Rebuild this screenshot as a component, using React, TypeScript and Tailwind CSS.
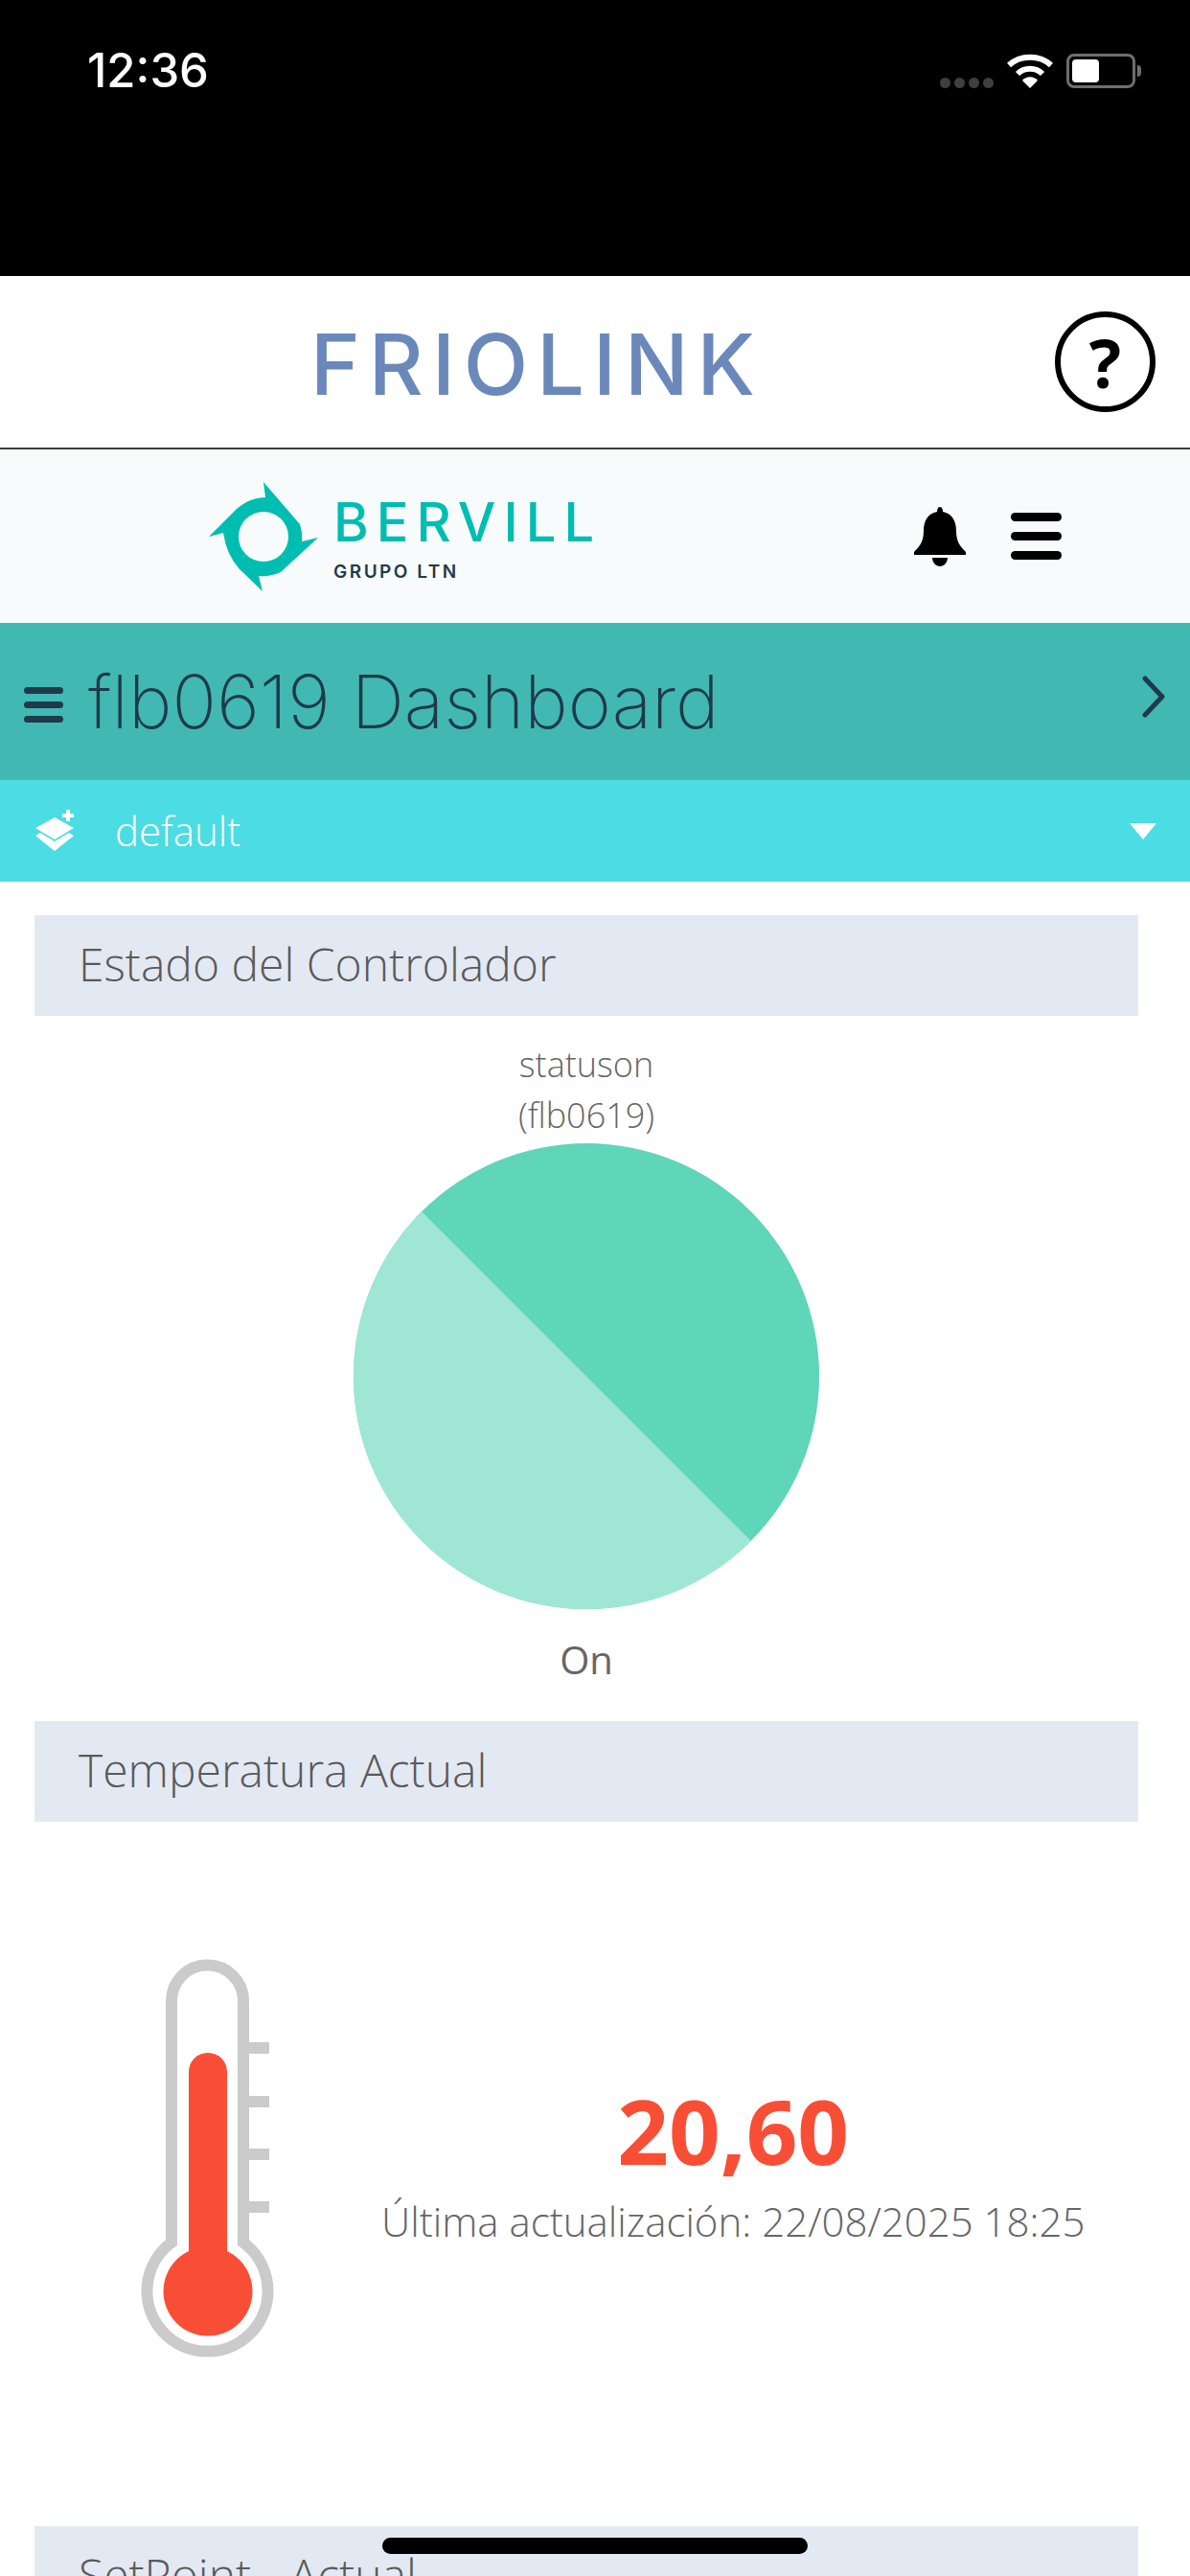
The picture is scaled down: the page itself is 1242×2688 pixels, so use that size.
import React from 'react';

const openSans = { fontFamily: '"Open Sans", sans-serif' };

const StatusBar = () => (
  <div className="h-[288px] bg-black flex items-start justify-between pl-[91px] pr-[51px] pt-[50px]">
    <span className="text-white text-[49px] leading-[48px] font-medium" style={{ fontFamily: 'Inter, sans-serif' }}>12:36</span>
    <div className="flex items-start gap-[14px] pt-[6px]">
      <div className="flex gap-[4px] pt-[25px]">
        <div className="w-[11px] h-[11px] rounded-full bg-[#3f3f3f]"></div>
        <div className="w-[11px] h-[11px] rounded-full bg-[#3f3f3f]"></div>
        <div className="w-[11px] h-[11px] rounded-full bg-[#3f3f3f]"></div>
        <div className="w-[11px] h-[11px] rounded-full bg-[#3f3f3f]"></div>
      </div>
      <svg width="48" height="36" viewBox="0 0 48 36">
        <path d="M2 12 C14 1 34 1 46 12" fill="none" stroke="#fff" strokeWidth="6" />
        <path d="M11 21 C18 14 30 14 37 21" fill="none" stroke="#fff" strokeWidth="6" />
        <path d="M16 28 C20 23 28 23 32 28 L24 36 Z" fill="#fff" />
      </svg>
      <div className="flex items-center">
        <div className="w-[72px] h-[36px] rounded-[8px] border-[3px] border-[#6e6e6e] p-[3px]">
          <div className="w-[28px] h-full rounded-[4px] bg-white"></div>
        </div>
        <div className="w-[4px] h-[12px] rounded-r-full bg-[#6e6e6e] ml-[2px]"></div>
      </div>
    </div>
  </div>
);

const FriolinkBar = () => (
  <div className="h-[181px] bg-white border-b-2 border-[#3d3d3d] flex items-center pl-[324px] pr-[36px] justify-between">
    <span className="text-[#6b88bb] text-[88px] leading-none font-medium tracking-[9px] mt-[4px]" style={{ fontFamily: 'Inter, sans-serif' }}>FRIOLINK</span>
    <div className="w-[105px] h-[105px] rounded-full border-[6px] border-black flex items-center justify-center">
      <span className="text-black text-[70px] leading-none font-bold" style={openSans}>?</span>
    </div>
  </div>
);

const BervillLogo = () => (
  <div className="flex items-center gap-[15px]">
    <svg width="116" height="116" viewBox="-58 -58 116 116">
      <path
        fillRule="evenodd"
        fill="#00bdb2"
        d="M0 -57 L38 -13 Q41 -4 40 5 L57 1 L18 37 Q7 42 -5 41 L-1 57 L-25 34 Q-39 18 -42 -4 L-57 0 L-28 -29 Q-14 -41 2 -41 Z M0 -26 A26 26 0 1 0 0 26 A26 26 0 1 0 0 -26 Z"
      />
    </svg>
    <div className="flex flex-col mt-[12px]">
      <span className="text-[#00bdb2] text-[56px] leading-[44px] tracking-[8px] font-medium" style={{ fontFamily: 'Inter, sans-serif' }}>BERVILL</span>
      <span className="text-[#1f3a4a] text-[19px] leading-[24px] font-semibold tracking-[2.5px] mt-[18px]" style={{ fontFamily: 'Inter, sans-serif' }}>GRUPO LTN</span>
    </div>
  </div>
);

const BervillBar = () => (
  <div className="h-[181px] bg-[#f8fbfc] flex items-center justify-between pl-[217px] pr-[134px]">
    <BervillLogo />
    <div className="flex items-center gap-[47px]">
      <svg width="54" height="62" viewBox="0 0 54 62">
        <path d="M27 0 C29 0 30 2 30 5 C40 7 44 15 44 25 C44 36 48 41 54 47 V50 H0 V47 C6 41 10 36 10 25 C10 15 14 7 24 5 C24 2 25 0 27 0 Z" fill="#000" />
        <path d="M19 53 H35 C35 58 31 62 27 62 C23 62 19 58 19 53 Z" fill="#000" />
      </svg>
      <div className="flex flex-col gap-[11px]">
        <div className="w-[53px] h-[9px] rounded-full bg-black"></div>
        <div className="w-[53px] h-[9px] rounded-full bg-black"></div>
        <div className="w-[53px] h-[9px] rounded-full bg-black"></div>
      </div>
    </div>
  </div>
);

const DashboardBar = () => (
  <div className="h-[164px] bg-[#41b9b2] flex items-center justify-between pl-[25px] pr-[25px]">
    <div className="flex items-center gap-[26px]">
      <div className="flex flex-col gap-[8px] mt-[6px]">
        <div className="w-[41px] h-[7px] rounded-full bg-[#1f3a4a]"></div>
        <div className="w-[41px] h-[7px] rounded-full bg-[#1f3a4a]"></div>
        <div className="w-[41px] h-[7px] rounded-full bg-[#1f3a4a]"></div>
      </div>
      <span className="text-[#1f3a4a] text-[77px] leading-none font-extralight" style={{ fontFamily: 'Inter, sans-serif' }}>flb0619 Dashboard</span>
    </div>
    <svg className="mb-[10px]" width="26" height="44" viewBox="0 0 26 44">
      <path d="M4 3 L22 22 L4 41" fill="none" stroke="#1f3a4a" strokeWidth="5" strokeLinecap="round" strokeLinejoin="round" />
    </svg>
  </div>
);

const LayerBar = () => (
  <div className="h-[106px] bg-[#4cdce3] flex items-center justify-between pl-[36px] pr-[35px]">
    <div className="flex items-center gap-[42px]">
      <svg width="42" height="44" viewBox="0 0 42 44">
        <path d="M21 8 L41 19 L21 31 L1 19 Z" fill="#fff" />
        <path d="M1 27 L6 24 L21 33 L36 24 L41 27 L21 43 Z" fill="#fff" />
        <path d="M33 0 H37 V4 H41 V8 H37 V12 H33 V8 H29 V4 H33 Z" fill="#fff" />
      </svg>
      <span className="text-white text-[42px] leading-none font-light" style={openSans}>default</span>
    </div>
    <div className="w-0 h-0 border-l-[14px] border-r-[14px] border-t-[17px] border-l-transparent border-r-transparent border-t-white"></div>
  </div>
);

const SectionTitle = ({ title }: { title: string }) => (
  <div className="h-[105px] bg-[#e3e9f2] flex items-center pl-[46px] pb-[4px]">
    <h3 className="text-[#5a5a5a] text-[48px] leading-none font-light" style={openSans}>{title}</h3>
  </div>
);

const StatusPie = () => (
  <div className="flex flex-col items-center">
    <p className="text-[#666] text-[36px] leading-[53px] font-light mt-[24px] text-center" style={openSans}>statuson<br />(flb0619)</p>
    <svg className="mt-[2px]" width="488" height="488" viewBox="0 0 488 488">
      <circle cx="244" cy="244" r="243" fill="#5fd5b9" />
      <path d="M72 72 A243 243 0 0 0 416 416 Z" fill="#a0e6d5" />
    </svg>
    <span className="text-[#666] text-[40px] leading-[54px] mt-[25px]" style={openSans}>On</span>
  </div>
);

const Thermometer = () => (
  <svg width="140" height="420" viewBox="0 0 140 420">
    <path d="M32 300 V48 A37.5 37.5 0 0 1 107 48 V300 A63 63 0 1 1 32 300 Z" fill="none" stroke="#cbcbcb" strokeWidth="12" />
    <rect x="113" y="91" width="21" height="12" fill="#cbcbcb" />
    <rect x="113" y="147" width="21" height="12" fill="#cbcbcb" />
    <rect x="113" y="202" width="21" height="12" fill="#cbcbcb" />
    <rect x="113" y="257" width="21" height="12" fill="#cbcbcb" />
    <rect x="50" y="102" width="40" height="230" rx="20" fill="#f94e36" />
    <circle cx="70" cy="351" r="46.5" fill="#f94e36" />
  </svg>
);

const TemperatureRow = () => (
  <div className="flex items-center h-[735px]">
    <div className="pl-[111px] w-[362px] shrink-0 mt-[-38px]">
      <Thermometer />
    </div>
    <div className="flex flex-col items-center mt-[-20px]">
      <span className="text-[#f94e36] text-[94px] leading-[100px] font-bold" style={openSans}>20,60</span>
      <span className="text-[#666] text-[42px] leading-[54px] font-light mt-[18px] whitespace-nowrap" style={openSans}>Última actualización: 22/08/2025 18:25</span>
    </div>
  </div>
);

export default function App() {
  return (
    <div className="relative w-[1242px] h-[2688px] bg-white overflow-hidden">
      <StatusBar />
      <FriolinkBar />
      <BervillBar />
      <DashboardBar />
      <LayerBar />

      <div className="pt-[35px] pl-[36px] pr-[54px]">
        <SectionTitle title="Estado del Controlador" />
        <StatusPie />
        <div className="mt-[37px]">
          <SectionTitle title="Temperatura Actual" />
        </div>
        <TemperatureRow />
        <SectionTitle title="SetPoint - Actual" />
      </div>

      {/* home indicator */}
      <div className="absolute left-[399px] top-[2648px] w-[444px] h-[17px] rounded-full bg-black"></div>
    </div>
  );
}
